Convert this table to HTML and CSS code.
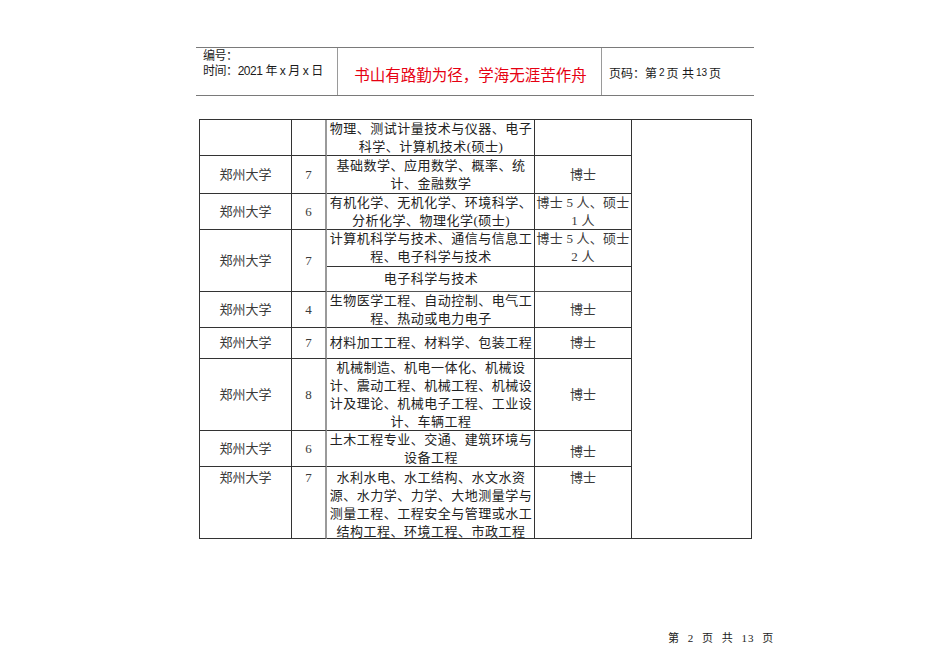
FILE: index.html
```html
<!DOCTYPE html>
<html lang="zh">
<head>
<meta charset="utf-8">
<title>郑州大学</title>
<link rel="stylesheet" href="styles.css">
</head>
<body>
<div class="page">
  <div class="header">
    <div class="h-left">
      <div>编号：</div>
      <div>时间：2021 年 x 月 x 日</div>
    </div>
    <div class="h-mid">书山有路勤为径，学海无涯苦作舟</div>
    <div class="h-right">页码：第<span class="num">2</span>页&nbsp;共<span class="num">13</span>页</div>
  </div>

  <div class="grid">
    <div class="cell c5"></div>

    <div class="cell"></div>
    <div class="cell c2"></div>
    <div class="cell c3"><span>物理、测试计量技术与仪器、电子</span><span>科学、计算机技术(硕士)</span></div>
    <div class="cell"></div>

    <div class="cell">郑州大学</div>
    <div class="cell c2">7</div>
    <div class="cell c3"><span>基础数学、应用数学、概率、统</span><span>计、金融数学</span></div>
    <div class="cell">博士</div>

    <div class="cell">郑州大学</div>
    <div class="cell c2">6</div>
    <div class="cell c3"><span>有机化学、无机化学、环境科学、</span><span>分析化学、物理化学(硕士)</span></div>
    <div class="cell c4"><span>博士 5 人、硕士</span><span>1 人</span></div>

    <div class="cell span2">郑州大学</div>
    <div class="cell c2 span2">7</div>
    <div class="cell c3"><span>计算机科学与技术、通信与信息工</span><span>程、电子科学与技术</span></div>
    <div class="cell c4"><span>博士 5 人、硕士</span><span>2 人</span></div>
    <div class="cell c3 thin"><span>电子科学与技术</span></div>
    <div class="cell thin"></div>

    <div class="cell">郑州大学</div>
    <div class="cell c2">4</div>
    <div class="cell c3"><span>生物医学工程、自动控制、电气工</span><span>程、热动或电力电子</span></div>
    <div class="cell">博士</div>

    <div class="cell">郑州大学</div>
    <div class="cell c2">7</div>
    <div class="cell c3"><span>材料加工工程、材料学、包装工程</span></div>
    <div class="cell">博士</div>

    <div class="cell">郑州大学</div>
    <div class="cell c2">8</div>
    <div class="cell c3"><span>机械制造、机电一体化、机械设</span><span>计、震动工程、机械工程、机械设</span><span>计及理论、机械电子工程、工业设</span><span>计、车辆工程</span></div>
    <div class="cell">博士</div>

    <div class="cell">郑州大学</div>
    <div class="cell c2">6</div>
    <div class="cell c3"><span>土木工程专业、交通、建筑环境与</span><span>设备工程</span></div>
    <div class="cell low">博士</div>

    <div class="cell top">郑州大学</div>
    <div class="cell c2 top">7</div>
    <div class="cell c3 top"><span>水利水电、水工结构、水文水资</span><span>源、水力学、力学、大地测量学与</span><span>测量工程、工程安全与管理或水工</span><span>结构工程、环境工程、市政工程</span></div>
    <div class="cell top">博士</div>
  </div>

  <div class="footer">第 2 页 共 13 页</div>
</div>
</body>
</html>
```

FILE: styles.css
```css
html, body {
  margin: 0;
  padding: 0;
  background: #ffffff;
}

.page {
  width: 950px;
  height: 672px;
  padding-top: 47px;
  box-sizing: border-box;
  color: #111;
}

.header {
  display: flex;
  margin-left: 196px;
  width: 558px;
  height: 49px;
  border-top: 1px solid #7a7a7a;
  border-bottom: 1px solid #7a7a7a;
  box-sizing: border-box;
  font-family: "Liberation Sans", "Noto Sans CJK SC", sans-serif;
  font-size: 12px;
  color: #1a1a1a;
}

.h-left {
  width: 142px;
  box-sizing: border-box;
  padding: 1px 0 0 7px;
  line-height: 15px;
  letter-spacing: -0.45px;
  border-right: 1px solid #9a9a9a;
}

.h-mid {
  width: 264px;
  box-sizing: border-box;
  border-right: 1px solid #9a9a9a;
  display: flex;
  align-items: center;
  justify-content: center;
  padding: 4px 0 0 2px;
  color: #e60012;
  font-size: 15.5px;
}

.h-right {
  flex: 1;
  display: flex;
  align-items: center;
  padding: 2px 0 0 7px;
  font-size: 12px;
  white-space: pre;
}

.h-right .num {
  font-size: 10px;
  margin: 0 2px;
}

.grid {
  display: grid;
  margin: 23px 0 0 199px;
  width: 552px;
  grid-template-columns: 92px 35px 208px 97px 120px;
  grid-template-rows: 36px 38px 36px 37px 25px 36px 31px 72px 36px 72px;
  border-top: 1px solid #333;
  border-left: 1px solid #333;
  box-sizing: content-box;
  font-family: "Liberation Serif", "Noto Sans CJK SC", serif;
  font-size: 13px;
  line-height: 18px;
  color: #3a3a3a;
}

.cell {
  border-right: 1px solid #333;
  border-bottom: 1px solid #333;
  display: flex;
  flex-direction: column;
  align-items: center;
  justify-content: center;
  text-align: center;
  box-sizing: border-box;
}

.c2 {
  border-right: 2px solid #9a9a9a;
}

.c3 {
  letter-spacing: 0.5px;
  padding-left: 1px;
  color: #222;
}

.c3 span, .c4 span {
  display: block;
  white-space: nowrap;
}

.c4 {
  letter-spacing: 0.2px;
}

.c5 {
  grid-column: 5;
  grid-row: 1 / span 10;
}

.span2 {
  grid-row: span 2;
}

.thin {
  border-bottom-color: #555;
}

.low {
  padding-top: 6px;
}

.top {
  justify-content: flex-start;
  padding-top: 2px;
}

.footer {
  margin-top: 92px;
  padding-left: 668px;
  font-family: "Liberation Serif", "Noto Sans CJK SC", serif;
  font-size: 11px;
  line-height: 14px;
  letter-spacing: 1px;
  word-spacing: 4px;
  color: #222;
}
```
